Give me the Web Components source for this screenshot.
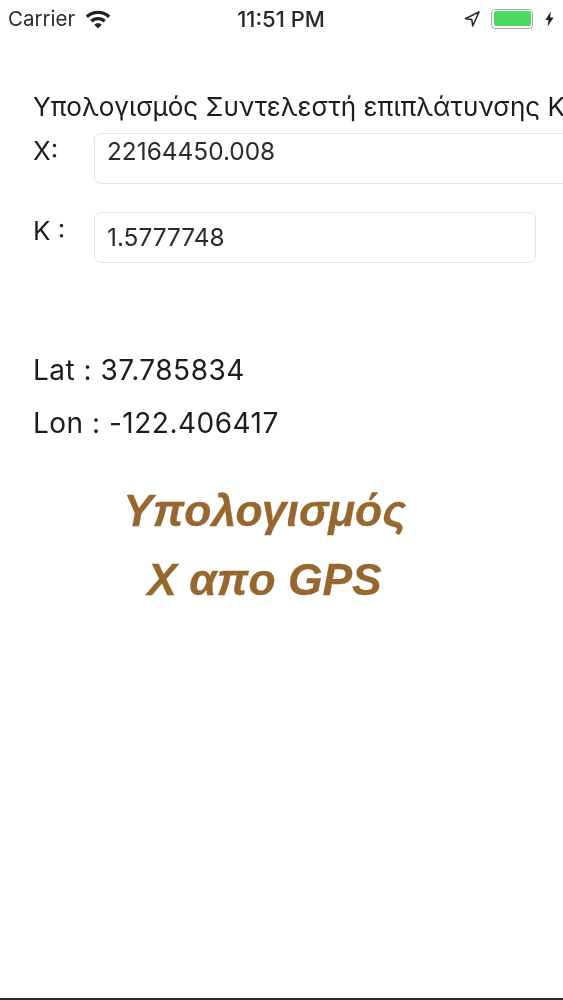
<!DOCTYPE html>
<html>
<head>
<meta charset="utf-8">
<style>
  html, body { margin: 0; padding: 0; background: #fff; }
  body { width: 563px; height: 1000px; overflow: hidden; display: flex; flex-direction: column; font-family: "Inter", "Liberation Sans", sans-serif; color: #1c1c1c; }
</style>
</head>
<body>
<status-bar></status-bar>
<main-screen></main-screen>
<home-edge></home-edge>

<script>
class StatusBar extends HTMLElement {
  constructor() {
    super();
    this.attachShadow({ mode: 'open' }).innerHTML = `
      <style>
        :host { display: flex; align-items: center; height: 37px; padding: 0 9px 0 8px; box-sizing: border-box; font-size: 20.5px; color: #2a2a2a; flex: none; filter: blur(.5px); }
        .left, .right { flex: 1; display: flex; align-items: center; }
        .left { gap: 10px; }
        .right { justify-content: flex-end; }
        .time { font-weight: 500; font-size: 22px; }
        .battery { width: 42px; height: 20px; margin: 0 12px 0 11px; box-sizing: border-box; border: 1px solid #a9a9a9; border-radius: 4px; padding: 1.5px; }
        .battery div { height: 100%; background: #4cd964; border-radius: 2px; }
        svg { display: block; }
      </style>
      <div class="left">
        <span>Carrier</span>
        <svg width="26" height="20" viewBox="0 0 26 19" fill="#222">
          <path d="M13 1.200c4.700 0 9 1.800 12.300 4.900l-2.200 2.300A14.600 14.600 0 0 0 13 4.400a14.600 14.600 0 0 0-10.100 4L.7 6.100A17.800 17.800 0 0 1 13 1.200z"/>
          <path d="M13 7.500c3 0 5.700 1.100 7.800 3l-2.300 2.400a8.100 8.100 0 0 0-11 0l-2.300-2.400c2.100-1.900 4.800-3 7.800-3z"/>
          <path d="M13 13.800c1.400 0 2.700.5 3.700 1.400L13 19l-3.700-3.800c1-.9 2.300-1.400 3.700-1.400z"/>
        </svg>
      </div>
      <span class="time">11:51 PM</span>
      <div class="right">
        <svg width="16" height="18" viewBox="0 0 16 17" fill="none" stroke="#222" stroke-width="1.500" stroke-linejoin="round">
          <path d="M15 1.500 1.500 8.200l6.300.9.900 6.400z"/>
        </svg>
        <div class="battery"><div></div></div>
        <svg width="9" height="18" viewBox="0 0 9 15" fill="#222"><path d="M5.800 0 .4 8.500h3.100L2.600 15 8.600 6H5.200z"/></svg>
      </div>`;
  }
}

class FieldRow extends HTMLElement {
  constructor() {
    super();
    this.attachShadow({ mode: 'open' }).innerHTML = `
      <style>
        :host { display: flex; align-items: flex-start; font-size: 26px; }
        .label { width: 61px; flex: none; }
        .box { box-sizing: border-box; height: 51px; flex: none; border: 1px solid #e2e2e2; border-radius: 7px; padding-left: 12px; font-size: 24.4px; color: #2b2b2b; }
      </style>
      <div class="label"><slot name="label"></slot></div>
      <div class="box"><slot></slot></div>`;
  }
  connectedCallback() {
    this.shadowRoot.querySelector('.box').style.width = this.getAttribute('box-width') + 'px';
    this.shadowRoot.querySelector('.box').style.lineHeight = this.getAttribute('value-line') + 'px';
    this.shadowRoot.querySelector('.label').style.lineHeight = this.getAttribute('label-line') + 'px';
  }
}

class MainScreen extends HTMLElement {
  constructor() {
    super();
    this.attachShadow({ mode: 'open' }).innerHTML = `
      <style>
        :host { display: block; flex: 1; padding: 52px 0 0 33px; overflow: hidden; filter: blur(.5px); }
        .title { font-size: 26.1px; line-height: 36px; white-space: nowrap; height: 44px; }
        .fields { display: flex; flex-direction: column; gap: 28px; }
        .coords { margin-top: 81px; font-size: 28px; letter-spacing: .5px; line-height: 53px; }
        .action { margin: 26px 0 0 -33px; width: 529px; text-align: center; font: italic bold 44.4px/69px "Liberation Sans", sans-serif; color: #96672f; -webkit-text-stroke: .3px #96672f; }
      </style>
      <div class="title">Υπολογισμός Συντελεστή επιπλάτυνσης Κ</div>
      <div class="fields">
        <field-row box-width="520" value-line="34" label-line="36"><span slot="label">X:</span>22164450.008</field-row>
        <field-row box-width="442" value-line="49" label-line="38"><span slot="label">K :</span>1.5777748</field-row>
      </div>
      <div class="coords">
        <div>Lat : 37.785834</div>
        <div>Lon : -122.406417</div>
      </div>
      <div class="action">Υπολογισμός<br>Χ απο GPS</div>`;
  }
}

class HomeEdge extends HTMLElement {
  constructor() {
    super();
    this.attachShadow({ mode: 'open' }).innerHTML = `
      <style>
        :host { display: block; flex: none; height: 2px; background: #2a2a2a; }
      </style>`;
  }
}

customElements.define('status-bar', StatusBar);
customElements.define('field-row', FieldRow);
customElements.define('main-screen', MainScreen);
customElements.define('home-edge', HomeEdge);
</script>
</body>
</html>
